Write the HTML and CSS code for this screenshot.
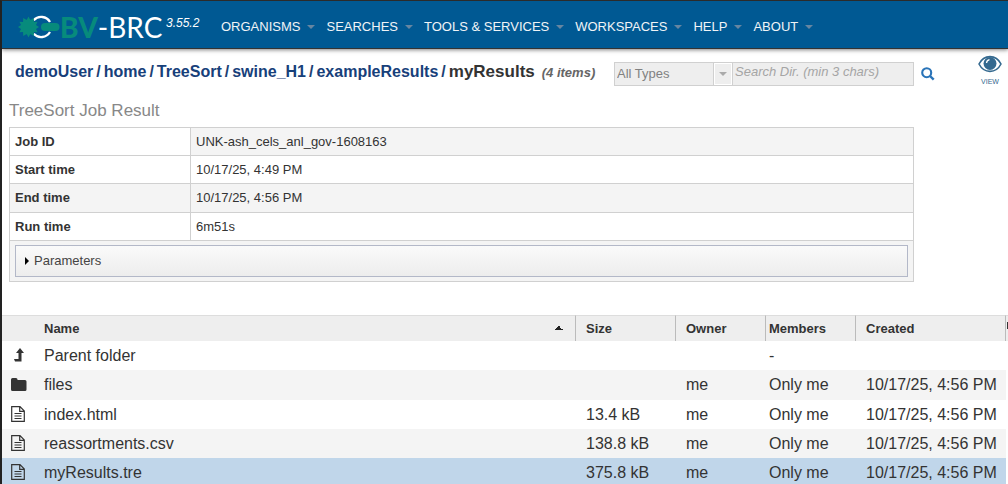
FILE: index.html
```html
<!DOCTYPE html>
<html lang="en">
<head>
<meta charset="utf-8">
<title>BV-BRC Workspace</title>
<link rel="stylesheet" href="styles.css">
</head>
<body>
<svg class="defs" aria-hidden="true">
  <symbol id="doc" viewBox="0 0 14 16"><path d="M.7 .7H9L13.3 5V15.3H.7ZM8.7 .7V5.3H13.3M3.5 7.5H10.5M3.5 10H10.5M3.5 12.5H10.5" fill="none" stroke="currentColor" stroke-width="1.2"/></symbol>
</svg>
<header class="topbar">
  <a class="brand" href="#" aria-label="BV-BRC home">
    <svg class="mark" viewBox="0 0 42 24" aria-hidden="true">
      <path d="M15.700 5.200A10.200 10.200 0 0 1 32 7M15.700 18.800A10.200 10.200 0 0 0 32 17" fill="none" stroke="#fff" stroke-width="2.300"/>
      <circle cx="10.500" cy="12" r="7.500" fill="#078b7c"/>
      <path d="M10.500 1.500L12.300 5L15.800 2.900L15.900 6.900L19.600 6.800L18 10L21 12L18 14L19.600 17.200L15.900 17.100L15.800 21.100L12.300 19L10.500 22.500L8.700 19L5.200 21.100L5.100 17.100L1.400 17.200L3 14L0 12L3 10L1.400 6.800L5.100 6.900L5.200 2.900L8.700 5Z" fill="#078b7c"/>
      <rect x="23" y="8" width="18.500" height="8" rx="4" fill="#078b7c"/>
    </svg>
    <span class="brand-bold">BV</span><span class="brand-light">-BRC</span>
  </a>
  <span class="version">3.55.2</span>
  <nav class="menu">
    <button type="button">ORGANISMS</button>
    <button type="button">SEARCHES</button>
    <button type="button">TOOLS &amp; SERVICES</button>
    <button type="button">WORKSPACES</button>
    <button type="button">HELP</button>
    <button type="button">ABOUT</button>
  </nav>
</header>
<main>
  <div class="pathbar">
    <div class="crumbs">
      <a href="#">demoUser</a><span>/</span><a href="#">home</a><span>/</span><a href="#">TreeSort</a><span>/</span><a href="#">swine_H1</a><span>/</span><a href="#">exampleResults</a><span>/</span><strong>myResults</strong><em>(4 items)</em>
    </div>
    <form class="search">
      <div class="type">
        <select aria-label="Type filter"><option>All Types</option></select>
        <span class="type-arrow"></span>
      </div>
      <input type="text" aria-label="Search directory" placeholder="Search Dir. (min 3 chars)">
      <button type="button" class="find" aria-label="Search">
        <svg viewBox="0 0 14 14"><circle cx="5.700" cy="5.700" r="4.500" fill="none" stroke="#2a74b8" stroke-width="2.100"/><path d="M9 9L12.700 12.700" stroke="#2a74b8" stroke-width="2.400"/></svg>
      </button>
    </form>
    <button type="button" class="view">
      <svg viewBox="0 0 24 18" aria-hidden="true"><path d="M1 9C6 -.8 18 -.8 23 9C18 18.800 6 18.800 1 9Z" fill="#fff" stroke="#34698f" stroke-width="1.600"/><circle cx="12" cy="8.500" r="6.500" fill="#34698f"/><path d="M8.500 8Q8.800 5.200 11.500 4.700" fill="none" stroke="#fff" stroke-width="1.300"/></svg>
      VIEW
    </button>
  </div>
  <section class="result">
    <h1>TreeSort Job Result</h1>
    <table class="job">
      <tr class="first"><th scope="row">Job ID</th><td>UNK-ash_cels_anl_gov-1608163</td></tr>
      <tr><th scope="row">Start time</th><td>10/17/25, 4:49 PM</td></tr>
      <tr class="shade tall"><th scope="row">End time</th><td>10/17/25, 4:56 PM</td></tr>
      <tr><th scope="row">Run time</th><td>6m51s</td></tr>
      <tr class="shade"><td class="params" colspan="2"><button type="button">Parameters</button></td></tr>
    </table>
  </section>
  <table class="files">
    <colgroup><col class="c-icon"><col><col class="c-size"><col class="c-owner"><col class="c-members"><col class="c-created"><col class="c-more"></colgroup>
    <thead>
      <tr><th></th><th class="sorted">Name</th><th>Size</th><th>Owner</th><th class="members">Members</th><th>Created</th><th class="more"></th></tr>
    </thead>
    <tbody>
      <tr><td class="icon"><svg class="up" viewBox="0 0 10 14" aria-hidden="true"><path d="M6 0L10 5H7.500V13.500H1L0 11H4.500V5H2Z" fill="currentColor"/></svg></td><td>Parent folder</td><td></td><td></td><td class="members">-</td><td></td><td></td></tr>
      <tr class="shade"><td class="icon"><svg class="folder" viewBox="0 0 16 13" aria-hidden="true"><path d="M0 1.500Q0 0 1.500 0H5Q6.500 0 6.500 1.500V2H14Q15.500 2 15.500 3.500V11.500Q15.500 13 14 13H1.500Q0 13 0 11.500Z" fill="currentColor"/></svg></td><td>files</td><td></td><td>me</td><td class="members">Only me</td><td>10/17/25, 4:56 PM</td><td></td></tr>
      <tr><td class="icon"><svg class="doc"><use href="#doc"/></svg></td><td>index.html</td><td>13.4 kB</td><td>me</td><td class="members">Only me</td><td>10/17/25, 4:56 PM</td><td></td></tr>
      <tr class="shade"><td class="icon"><svg class="doc"><use href="#doc"/></svg></td><td>reassortments.csv</td><td>138.8 kB</td><td>me</td><td class="members">Only me</td><td>10/17/25, 4:56 PM</td><td></td></tr>
      <tr class="selected"><td class="icon"><svg class="doc"><use href="#doc"/></svg></td><td>myResults.tre</td><td>375.8 kB</td><td>me</td><td class="members">Only me</td><td>10/17/25, 4:56 PM</td><td></td></tr>
    </tbody>
  </table>
</main>
</body>
</html>
```
FILE: styles.css
```css
* { box-sizing: border-box; }
html { overflow: hidden; }
body {
  margin: 0;
  min-height: 100vh;
  border-left: 2px solid #222;
  border-top: 1px solid #2b2b2b;
  background: #fff;
  color: #333;
  font: 13px/16px "Liberation Sans", Arial, sans-serif;
}
button, input, select { font: inherit; }
button { border: 0; padding: 0; background: none; cursor: pointer; }
.defs { position: absolute; width: 0; height: 0; }

.topbar {
  display: flex;
  align-items: center;
  height: 48px;
  padding: 4px 0 0 16px;
  background: #005993;
  border-bottom: 1px solid #333;
  box-shadow: 0 1px 4px rgba(0, 0, 0, .5);
}
.brand { display: flex; align-items: center; flex: none; width: 147px; color: #fff; text-decoration: none; line-height: 32px; white-space: nowrap; }
.mark { flex: none; width: 42px; height: 24px; }
.brand-bold, .brand-light { font-family: Lato, sans-serif; font-size: 28px; }
.brand-bold { font-weight: 900; color: #078b7c; }
.version { align-self: flex-start; flex: none; width: 56px; margin-top: 10px; padding-left: 1px; color: #fff; font-size: 12px; font-style: italic; }
.menu { display: flex; gap: 11px; }
.menu button { display: flex; align-items: center; gap: 7px; color: #f0f4f7; white-space: nowrap; }
.menu button::after { content: ""; border: 4px solid transparent; border-top-color: #6686a1; border-bottom: 0; }

.pathbar { display: flex; align-items: flex-start; padding: 5px 4px 0 13px; }
.crumbs { display: flex; align-items: baseline; gap: 3px; width: 600px; padding-top: 8px; font-size: 16px; font-weight: bold; line-height: 20px; color: #1c4173; white-space: nowrap; }
.crumbs a { color: #17407a; text-decoration: none; }
.crumbs strong { color: #333; font-size: 17px; }
.crumbs em { padding-left: 4px; color: #666; font-size: 13px; }
.search { display: flex; flex: 1; padding-top: 8px; }
.type { display: flex; width: 119px; height: 24px; border: 1px solid #d0d0d0; background: #eee; }
.type select { flex: 1; min-width: 0; appearance: none; border: 0; padding: 0 2px; background: none; color: #818181; }
.type-arrow { display: flex; align-items: center; justify-content: center; width: 18px; border: 1px solid #fff; outline: 1px solid #d0d0d0; }
.type-arrow::after { content: ""; border: 4px solid transparent; border-top-color: #aaa; border-bottom: 0; }
.search input { flex: 1; min-width: 0; height: 24px; border: 1px solid #d0d0d0; border-left: 0; padding: 0 2px 5px; background: #eee; }
.search input::placeholder { color: #a5a5a5; font-style: italic; }
.find { width: 28px; height: 24px; padding-top: 4px; }
.find svg { width: 14px; height: 14px; }
.view { display: flex; flex-direction: column; align-items: center; width: 24px; margin: 0 2px 0 36px; padding-top: 1px; color: #34698f; font-size: 7px; line-height: 18px; }
.view svg { width: 24px; height: 18px; }

.result { padding: 10px 94px 0 7px; }
h1 { margin: 0 0 6px; color: #888; font-size: 17px; font-weight: normal; line-height: 20px; }
.job { width: 100%; border-collapse: collapse; }
.job th, .job td { height: 28px; border: 1px solid #d0d0d0; padding: 0 5px; text-align: left; }
.job .tall > * { height: 29px; }
.job th { width: 181px; }
.first td, .shade { background: #f4f4f4; }
.job .params { height: 41px; padding: 4px 5px; }
.params button { display: flex; align-items: center; gap: 5px; width: 100%; height: 32px; border: 1px solid #b3b8c8; padding: 0 9px; background: linear-gradient(#fafafa, #ededed); color: #444; }
.params button::before { content: ""; border: 4px solid transparent; border-left-color: #000; border-right: 0; }

.files { width: 100%; margin-top: 33px; border-collapse: separate; border-spacing: 0; table-layout: fixed; font-size: 16px; white-space: nowrap; }
.c-icon { width: 32px; }
.c-size { width: 100px; }
.c-owner, .c-members { width: 90px; }
.c-created { width: 150px; }
.c-more { width: 2px; }
.files th { height: 26px; border-top: 1px solid #ddd; border-right: 1px solid #bbb; padding: 0 10px; background: #eee; font-size: 13px; text-align: left; }
.files th:first-child, .files .more { border-right: 0; }
.files .sorted { background: conic-gradient(from 135deg at 50% 0, #222 25%, #0000 0) right 12px top 10px / 8px 4px no-repeat, #eee; }
.files .more { background: linear-gradient(#333, #333) right 6px / 1px 7px no-repeat, #eee; }
.files td { height: 29px; padding: 0 10px; overflow: hidden; }
.files .shade td { height: 30px; }
.files .shade:nth-child(4) td { height: 29px; }
.files .members { padding: 0 3px; }
.files .icon { padding: 0 0 2px 9px; line-height: 0; }
.files .more, .files td:last-child { padding: 0; }
.files td:last-child { background: #fff; }
.selected { background: #c0d6ea; }
.icon svg { display: block; }
.doc { width: 14px; height: 16px; }
.folder { width: 16px; height: 13px; }
.icon .up { width: 10px; height: 14px; margin-left: 3px; }
```
